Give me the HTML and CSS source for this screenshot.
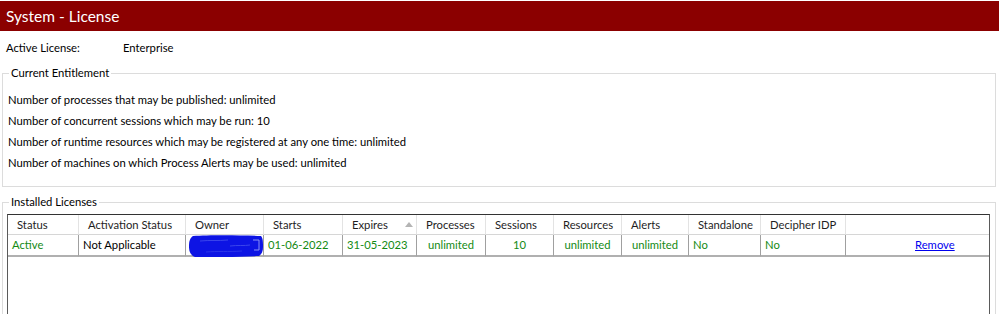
FILE: index.html
```html
<!DOCTYPE html>
<html lang="en">
<head>
    <meta charset="UTF-8">
    <title>System - License</title>
    <link rel="stylesheet" href="styles.css">
</head>
<body>

    <div class="title-bar">System - License</div>

    <div class="active-license">
        <span class="label">Active License:</span>
        <span class="value">Enterprise</span>
    </div>

    <fieldset class="group entitlement">
        <legend>Current Entitlement</legend>
        <p>Number of processes that may be published: unlimited</p>
        <p>Number of concurrent sessions which may be run: 10</p>
        <p>Number of runtime resources which may be registered at any one time: unlimited</p>
        <p>Number of machines on which Process Alerts may be used: unlimited</p>
    </fieldset>

    <fieldset class="group installed">
        <legend>Installed Licenses</legend>
        <div class="grid">
            <div class="row head">
                <div class="cell">Status</div>
                <div class="cell">Activation Status</div>
                <div class="cell">Owner</div>
                <div class="cell">Starts</div>
                <div class="cell sorted">Expires <span class="sort-arrow"></span></div>
                <div class="cell">Processes</div>
                <div class="cell">Sessions</div>
                <div class="cell">Resources</div>
                <div class="cell">Alerts</div>
                <div class="cell">Standalone</div>
                <div class="cell">Decipher IDP</div>
                <div class="cell"></div>
            </div>
            <div class="row data">
                <div class="cell ok">Active</div>
                <div class="cell">Not Applicable</div>
                <div class="cell owner">
                    <!-- owner name was scribbled out in blue -->
                    <svg width="76" height="22" viewBox="0 0 76 22">
                        <path d="M5 1 C20 0 50 0 73 1 C75 3 75 8 75 12 C75 16 74 19 71 21 C50 22 25 22 7 22 C2 20 1 16 1 11 C1 6 2 3 5 1 Z" fill="#0d14e4"/>
                        <path d="M12 6 C22 5 30 6 40 5" stroke="#3a44ec" stroke-width="1" fill="none"/>
                        <path d="M42 11 C50 10 56 11 62 10" stroke="#3a44ec" stroke-width="1" fill="none"/>
                        <path d="M65 5 L71 5 L71 15 L66 15" stroke="#8a90f4" stroke-width="1" fill="none"/>
                        <path d="M18 17 C30 16 40 17 54 16" stroke="#2a33e8" stroke-width="1" fill="none"/>
                    </svg>
                </div>
                <div class="cell ok">01-06-2022</div>
                <div class="cell ok">31-05-2023</div>
                <div class="cell ok center">unlimited</div>
                <div class="cell ok center">10</div>
                <div class="cell ok center">unlimited</div>
                <div class="cell ok center">unlimited</div>
                <div class="cell ok">No</div>
                <div class="cell ok">No</div>
                <div class="cell action"><a href="#">Remove</a></div>
            </div>
        </div>
    </fieldset>

</body>
</html>
```

FILE: styles.css
```css
:root {
    --title-bg: #8b0000;
    --text-color: #000000;
    --head-text: #1e1e1e;
    --group-border: #dcdcdc;
    --grid-border: #5a5a5a;
    --head-sep: #e3e3e3;
    --row-sep: #a0a0a0;
    --ok-color: #138a13;
    --link-color: #0000ee;
}

html, body {
    height: 314px;
    overflow: hidden;
}

body {
    margin: 0;
    font-family: Lato, 'Liberation Sans', sans-serif;
    font-size: 11.25px;
    color: var(--text-color);
    background-color: #ffffff;
}

.title-bar {
    margin-top: 1px;
    height: 30px;
    line-height: 30px;
    padding: 0 6px;
    background-color: var(--title-bg);
    color: #ffffff;
    font-size: 15.5px;
}

.active-license {
    display: flex;
    padding: 9px 6px 0 6px;
    line-height: 16px;
}
.active-license .label { width: 117px; }

/* --- Group boxes --- */
.group {
    margin: 9px 3px 0 2px;
    padding: 8px 0 13px 5px;
    border: 1px solid var(--group-border);
    min-width: 0;
}
.group legend {
    margin-left: 1px;
    padding: 0 2px;
    line-height: 16px;
}

.entitlement p {
    margin: 0;
    line-height: 21px;
}

.installed {
    margin-top: 7px;
    padding: 4px 5px 0 4px;
}
.installed legend { margin-left: 2px; }

/* --- License grid --- */
.grid {
    height: 120px;
    border: 1px solid var(--grid-border);
    border-top-color: #333333;
}

.row {
    display: grid;
    grid-template-columns: 71px 107px 78px 79px 74px 69px 68px 68px 67px 72px 85px 143px;
}

.cell {
    box-sizing: border-box;
    border-right: 1px solid var(--row-sep);
    white-space: nowrap;
    overflow: hidden;
}
.cell:last-child { border-right: none; }

.head .cell {
    height: 20px;
    line-height: 19px;
    padding-left: 9px;
    color: var(--head-text);
    border-right-color: var(--head-sep);
    border-bottom: 1px solid #d6d6d6;
}

.head .sorted {
    display: flex;
    justify-content: space-between;
    align-items: center;
    padding-right: 3px;
}
.sort-arrow {
    width: 0;
    height: 0;
    border-left: 4px solid transparent;
    border-right: 4px solid transparent;
    border-bottom: 5px solid #b4b4b4;
}

.data .cell {
    height: 22px;
    line-height: 20px;
    padding-left: 4px;
    border-bottom: 2px solid #b0b0b0;
}
.data .ok { color: var(--ok-color); }
.data .center { text-align: center; padding-left: 0; }

.data .owner { padding-left: 2px; overflow: visible; }
.owner svg { display: block; margin-top: 0; }

.data .action { padding-left: 69px; }
.action a { color: var(--link-color); }
```
